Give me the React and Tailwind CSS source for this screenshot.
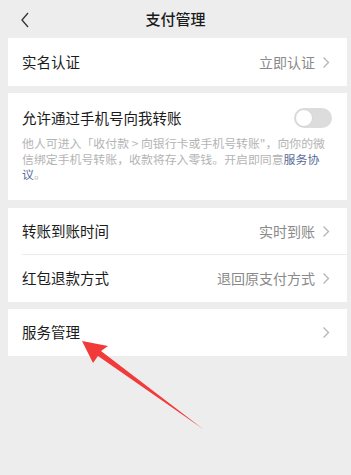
import React from "react";

const font = { fontFamily: '"Noto Sans CJK SC", "Noto Sans", sans-serif' };

const Chevron = () => (
  <svg width="8" height="13" viewBox="0 0 8 13" className="ml-[7px]">
    <path d="M1.5 1.5 L6.5 6.5 L1.5 11.5" fill="none" stroke="#b5b5b5" strokeWidth="1.3" />
  </svg>
);

const Row = ({ label, value, border }) => (
  <div className="relative flex h-[47px] items-center justify-between pl-[14px] pr-[17px]">
    <span className="text-[14.5px] text-[#1b1b1b]">{label}</span>
    <div className="flex items-center">
      {value && <span className="text-[14px] text-[#8a8a8a]">{value}</span>}
      <Chevron />
    </div>
    {border && <div className="absolute bottom-0 left-[14px] right-0 h-px bg-[#ececec]" />}
  </div>
);

export default function App() {
  return (
    <div className="relative h-[475px] w-[351px] overflow-hidden bg-[#ededed]" style={font}>
      <div className="relative flex h-[38px] items-center justify-center">
        <svg width="10" height="16" viewBox="0 0 10 16" className="absolute left-[20px] top-[12px]">
          <path d="M8 1 L2 8 L8 15" fill="none" stroke="#333" strokeWidth="1.3" />
        </svg>
        <span className="text-[15px] font-medium text-[#1b1b1b]">支付管理</span>
      </div>

      <div className="ml-[8px] mr-[4px] flex flex-col">
        <div className="bg-white">
          <div className="flex h-[48px] items-center justify-between pl-[14px] pr-[17px]">
            <span className="text-[14.5px] text-[#1b1b1b]">实名认证</span>
            <div className="flex items-center">
              <span className="text-[14px] text-[#8a8a8a]">立即认证</span>
              <Chevron />
            </div>
          </div>
        </div>

        <div className="mt-[7px] bg-white pb-[18px] pl-[14px] pr-[15px] pt-[14px]">
          <div className="flex items-center justify-between">
            <span className="text-[14.5px] leading-[22px] text-[#1b1b1b]">允许通过手机号向我转账</span>
            <div className="relative h-[20px] w-[38px] rounded-full bg-[#dcdcdc]">
              <div className="absolute left-[1px] top-[1px] h-[18px] w-[18px] rounded-full border border-[#d4d4d4] bg-white" />
            </div>
          </div>
          <p className="mt-[6px] w-[308px] text-[11.9px] leading-[15.5px] text-[#b4b4b4]">
            他人可进入「收付款 &gt; 向银行卡或手机号转账"，向你的微信绑定手机号转账，收款将存入零钱。开启即同意<span className="text-[#576b95]">服务协议</span>。
          </p>
        </div>

        <div className="mt-[8px] bg-white">
          <Row label="转账到账时间" value="实时到账" border />
          <Row label="红包退款方式" value="退回原支付方式" />
        </div>

        <div className="mt-[7px] bg-white">
          <Row label="服务管理" />
        </div>
      </div>

      <svg className="pointer-events-none absolute left-0 top-0" width="351" height="475" viewBox="0 0 351 475">
        <path d="M82 341 L108 346 L101 351 L203 429 L98 356 L93 363 Z" fill="#f23a3a" />
      </svg>
    </div>
  );
}
